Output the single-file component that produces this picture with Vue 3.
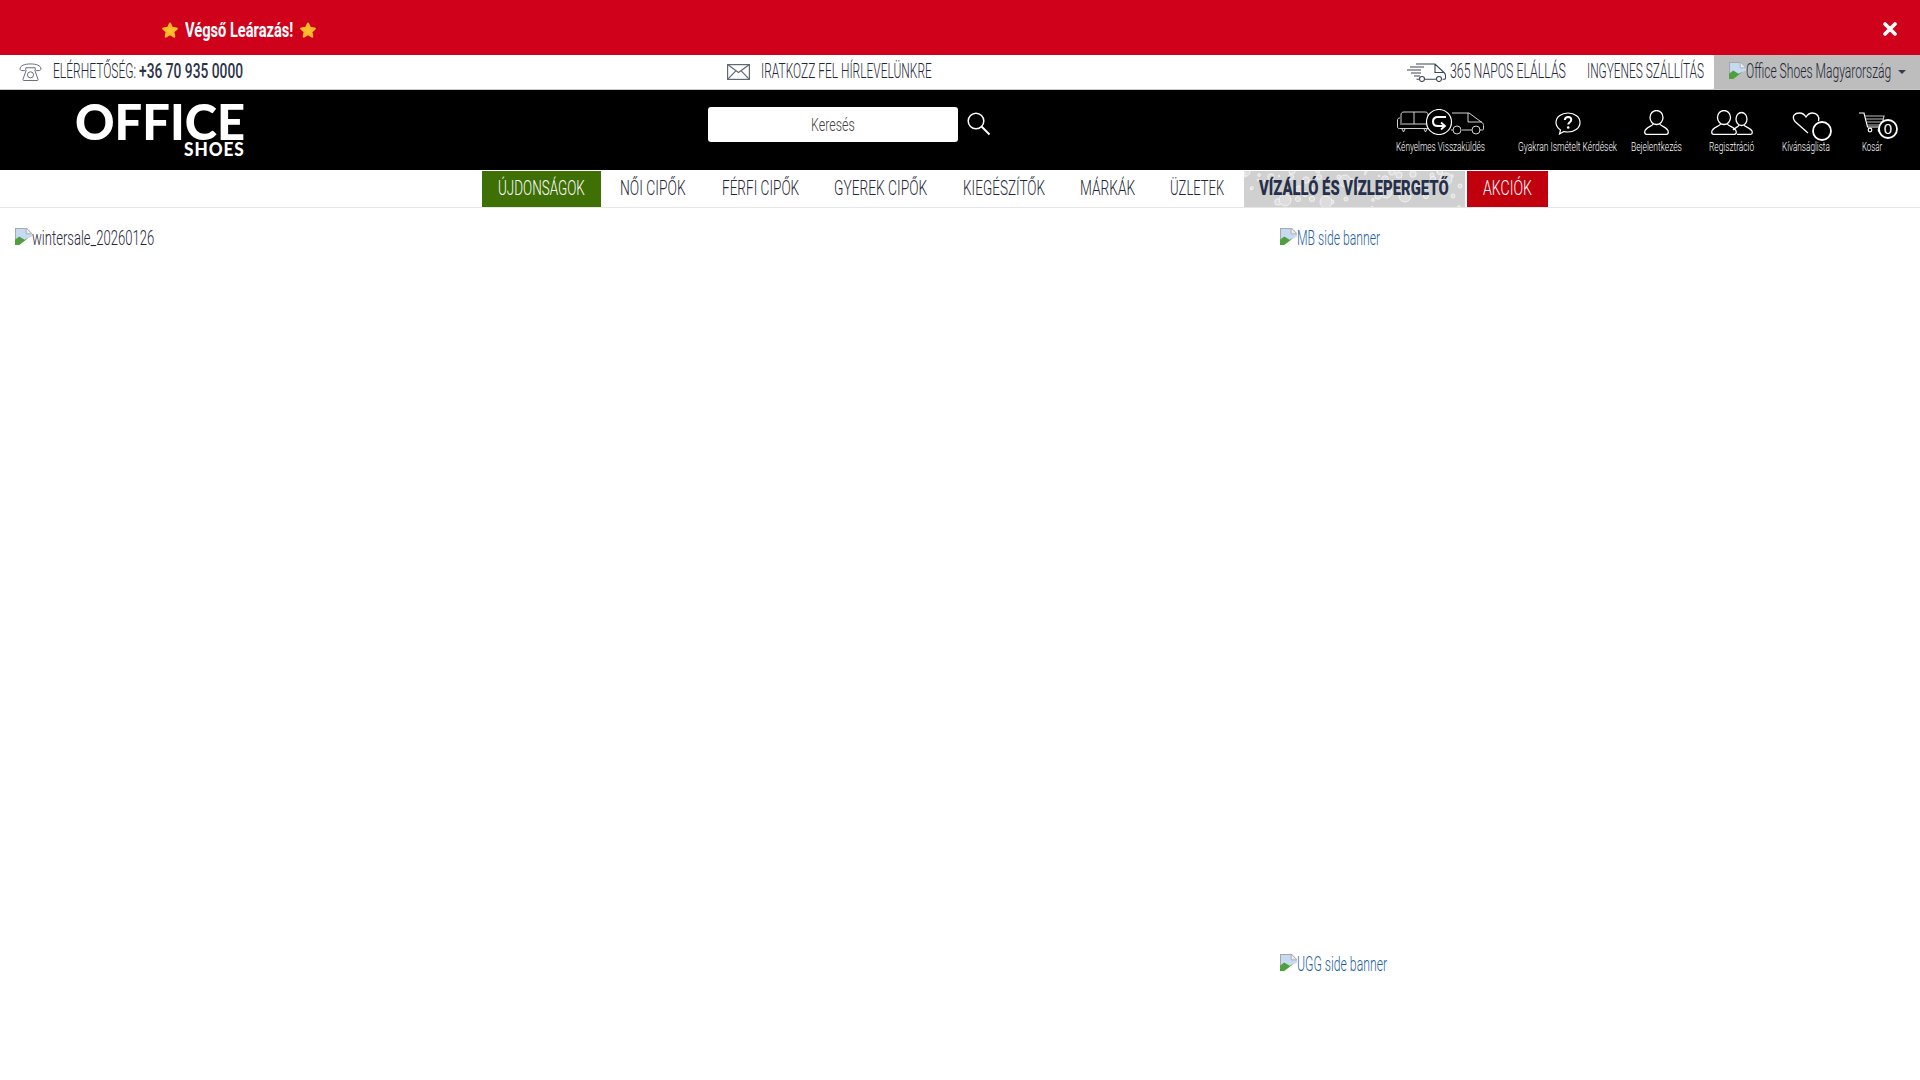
<template>
  <div class="page">
    <div class="promo">
      <div class="promo-text">
        <svg class="star" viewBox="0 0 24 24"><path d="M12 3.500l2.700 5.800 6.300.8-4.600 4.300 1.200 6.300L12 17.400l-5.600 3.300 1.200-6.300L3 10.100l6.300-.8z" fill="#fcc02e" stroke="#fcb62a" stroke-width="3" stroke-linejoin="round"/></svg>
        <span class="fit" v-fit="108"><span class="promo-label">Végső Leárazás!</span></span>
        <svg class="star" viewBox="0 0 24 24"><path d="M12 3.500l2.700 5.800 6.300.8-4.600 4.300 1.200 6.300L12 17.400l-5.600 3.300 1.200-6.300L3 10.100l6.300-.8z" fill="#fcc02e" stroke="#fcb62a" stroke-width="3" stroke-linejoin="round"/></svg>
      </div>
      <svg class="close" viewBox="0 0 14 14"><path d="M2 2l10 10M12 2L2 12" stroke="#fff" stroke-width="3.600" stroke-linecap="round"/></svg>
    </div>

    <div class="infobar">
      <div class="contact">
        <svg class="ic-phone" viewBox="0 0 24 19" fill="none" stroke="#5f6675" stroke-width="1">
          <path d="M1 6.500C1 2.500 6 1 12 1s11 1.500 11 5.500c0 1-1 1.500-2 1.500h-2.500c-1 0-1.500-.7-1.500-2V5H7v1c0 1.300-.5 2-1.500 2H3C2 8 1 7.500 1 6.500z"/>
          <path d="M7.500 7.500L4 17.500c0 .5.300 1 1 1h14c.7 0 1-.5 1-1l-3.500-10"/>
          <circle cx="12" cy="12.500" r="3.200"/>
        </svg>
        <span class="fit" v-fit="83"><span class="info-label">ELÉRHETŐSÉG:</span></span>
        <span class="fit phone" v-fit="104"><span class="info-label strong">+36 70 935 0000</span></span>
      </div>
      <div class="newsletter">
        <svg class="ic-mail" viewBox="0 0 23 16" fill="none" stroke="#5f6675" stroke-width="1.200">
          <rect x=".6" y=".6" width="21.800" height="14.800"/>
          <path d="M.6.6l10.900 8 10.900-8M.6 15.400l8.200-8.600M22.400 15.400l-8.200-8.600"/>
        </svg>
        <span class="fit" v-fit="171"><span class="info-label">IRATKOZZ FEL HÍRLEVELÜNKRE</span></span>
      </div>
      <div class="perks">
        <svg class="ic-truck" viewBox="0 0 40 20" fill="none" stroke="#3d4456" stroke-width="1.100">
          <path d="M9 2h19l9 8.500c1.200 1 1.500 1.500 1.500 3V16c0 .8-.5 1.300-1.300 1.300h-1.700M29 17.300H18M12 17.300H9.500M28 2v8.500h9"/>
          <circle cx="15" cy="17" r="2.500"/><circle cx="32" cy="17" r="2.500"/>
          <path d="M3 5h14M0 8h14M4 11h10M7 14h6"/>
        </svg>
        <span class="fit" v-fit="116"><span class="info-label">365 NAPOS ELÁLLÁS</span></span>
        <span class="fit shipping" v-fit="117"><span class="info-label">INGYENES SZÁLLÍTÁS</span></span>
      </div>
      <div class="country">
        <svg class="broken" viewBox="0 0 16 16">
          <path d="M0 0h11l5 5v3L0 15z" fill="#c6daf3"/>
          <path d="M.5 14V.5h10.300l4.700 4.700" fill="none" stroke="#a8a8a8"/>
          <path d="M10.500.500v5h5" fill="#eee" stroke="#a8a8a8" stroke-width=".8"/>
          <path d="M0 16v-5l4-3 5 3 4-2-5 4-4 3z" fill="#4f9f3c"/>
        </svg>
        <span class="fit" v-fit="145"><span class="info-label">Office Shoes Magyarország</span></span>
        <i class="caret"></i>
      </div>
    </div>

    <header class="mainbar">
      <div class="logo-col">
        <div class="logo">
          <span class="fit" v-fit="170"><span class="logo-top">OFFICE</span></span>
          <span class="fit logo-line" v-fit="61"><span class="logo-sub">SHOES</span></span>
        </div>
      </div>
      <div class="search">
        <div class="search-input"><span class="fit" v-fit="44"><span class="search-ph">Keresés</span></span></div>
        <svg class="ic-search" viewBox="0 0 24 24" fill="none" stroke="#fff">
          <circle cx="9" cy="9" r="7.800" stroke-width="1.500"/>
          <path d="M14.500 14.500l8 8" stroke-width="2"/>
        </svg>
      </div>
      <div class="tools">
        <div v-for="t in tools" :key="t.label" class="tool" :class="'tool-' + t.icon" :style="{ marginLeft: t.gap + 'px' }">
          <div class="tool-icon">
            <svg v-if="t.icon === 'returns'" width="88" height="26" viewBox="0 0 88 26" fill="none" stroke="#e8e8e8" stroke-width=".9">
              <path d="M4 6c0-2 1-3 3-3h21c2 0 3 1 3 3v2M3 9c-2 0-2.500 1-2.500 2v7c0 1 .5 1.500 2 1.500h29M4 14V6M3 15h28M17 3v12M5 20l1.500 3 1.500-3M27 20l1.500 3 1.500-3"/>
              <circle cx="42" cy="13" r="12.500" fill="#000" stroke="#fff" stroke-width="1.200"/>
              <path d="M49 8h-8c-3 0-5 1.500-5 4.500s2 4.500 5 4.500h6" stroke="#fff" stroke-width="2"/>
              <path d="M44 13.500l4 3.500-4 3.500" stroke="#fff" stroke-width="1.800"/>
              <path d="M55 4h17l13 9.500c1 .8 1.500 1.500 1.500 3V20c0 .5-.5 1-1 1h-3M75 21H65M56 21h-2M71 4v9h14"/>
              <circle cx="60" cy="21" r="4"/><circle cx="79" cy="21" r="4"/>
            </svg>
            <svg v-else-if="t.icon === 'help'" width="26" height="23" viewBox="0 0 26 23" fill="none" stroke="#fff" stroke-width="1.200">
              <path d="M13 1c6.800 0 12 4 12 9.500S19.800 20 13 20c-1.500 0-3-.2-4-.5L4.500 22l1-4C2.800 16 1 13.500 1 10.500 1 5 6.200 1 13 1z"/>
              <path d="M9.800 8c.2-1.800 1.500-3 3.300-3 1.900 0 3.200 1.200 3.200 2.800 0 2.400-3 2.500-3 4.700" stroke-width="2"/>
              <circle cx="13.200" cy="15.500" r="1.300" fill="#fff" stroke="none"/>
            </svg>
            <svg v-else-if="t.icon === 'user'" width="25" height="25" viewBox="0 0 25 25" fill="none" stroke="#fff" stroke-width="1.300">
              <ellipse cx="12.500" cy="7.500" rx="6.500" ry="7"/>
              <path d="M9 14c0 2-8.300 3.500-8.300 8 0 1.300.7 2.300 2 2.300h19.600c1.300 0 2-1 2-2.300 0-4.500-8.300-6-8.300-8"/>
            </svg>
            <svg v-else-if="t.icon === 'users'" width="42" height="25" viewBox="0 0 42 25" fill="none" stroke="#fff" stroke-width="1.300">
              <ellipse cx="13" cy="7.500" rx="6.500" ry="7"/>
              <path d="M9.500 14c0 2-8.800 3.500-8.800 8 0 1.300.7 2.300 2 2.300h20.600c1.300 0 2-1 2-2.300 0-4.500-8.800-6-8.800-8"/>
              <ellipse cx="30.500" cy="9" rx="5.500" ry="6.500"/>
              <path d="M28 15c0 1.500-3.500 2.500-6 5M33 15c0 2 8.300 3 8.300 7.500 0 1-.6 1.800-1.700 1.800H26"/>
            </svg>
            <svg v-else-if="t.icon === 'wish'" width="52" height="30" viewBox="0 0 52 30" fill="none" stroke="#fff" stroke-width="1.300">
              <path d="M28 21L15 9.500C11 4 15 1 19.500 1c3 0 5 1.500 6.500 4 1.500-2.500 3.500-4 6.500-4 4.500 0 7.500 4 6 8"/>
              <circle cx="42" cy="19" r="9" fill="#000" stroke-width="1.800"/>
            </svg>
            <svg v-else width="60" height="28" viewBox="0 0 60 28" fill="none" stroke="#fff" stroke-width="1.200">
              <path d="M17 1h5l3.500 14h13"/>
              <path d="M23 4h19l-2 9H25M24 7h17M25 10h15.500" stroke="#bbb"/>
              <circle cx="28" cy="18" r="1.800"/><circle cx="38" cy="18" r="1.800"/>
              <circle cx="46" cy="17" r="9" fill="#000" stroke-width="1.800"/>
              <text x="46" y="22" class="cart-count">0</text>
            </svg>
          </div>
          <span class="fit" v-fit="t.width"><span class="tool-label">{{ t.label }}</span></span>
        </div>
      </div>
    </header>

    <nav class="menu">
      <a v-for="m in menu" :key="m.label" class="menu-item" :class="m.cls">
        <svg v-if="m.cls === 'water'" class="drops" viewBox="0 0 221 36" preserveAspectRatio="none">
          <circle v-for="(d, i) in drops" :key="i" :cx="d.x" :cy="d.y" :r="d.r" fill="#dcdcdc" stroke="#f6f6f6" stroke-width=".8"/>
        </svg>
        <span class="fit" v-fit="m.width"><span class="menu-label">{{ m.label }}</span></span>
      </a>
    </nav>

    <main class="content">
      <div class="hero">
        <div class="pic">
          <svg class="broken" viewBox="0 0 16 16">
            <path d="M0 0h11l5 5v3L0 15z" fill="#c6daf3"/>
            <path d="M.5 14V.5h10.300l4.700 4.700" fill="none" stroke="#a8a8a8"/>
            <path d="M10.500.500v5h5" fill="#eee" stroke="#a8a8a8" stroke-width=".8"/>
            <path d="M0 16v-5l4-3 5 3 4-2-5 4-4 3z" fill="#4f9f3c"/>
          </svg>
          <span class="fit" v-fit="122"><span class="alt">wintersale_20260126</span></span>
        </div>
      </div>
      <aside class="side">
        <a v-for="b in banners" :key="b.label" class="pic side-pic">
          <svg class="broken" viewBox="0 0 16 16">
            <path d="M0 0h11l5 5v3L0 15z" fill="#c6daf3"/>
            <path d="M.5 14V.5h10.300l4.700 4.700" fill="none" stroke="#a8a8a8"/>
            <path d="M10.500.500v5h5" fill="#eee" stroke="#a8a8a8" stroke-width=".8"/>
            <path d="M0 16v-5l4-3 5 3 4-2-5 4-4 3z" fill="#4f9f3c"/>
          </svg>
          <span class="fit" v-fit="b.width"><span class="alt link">{{ b.label }}</span></span>
        </a>
      </aside>
    </main>
  </div>
</template>

<script setup>
// Oswald is not available here, so text is squeezed to the width it has in the design
const vFit = {
  mounted(el, binding) {
    const inner = el.firstElementChild
    el.style.width = binding.value + 'px'
    inner.style.transform = `scaleX(${binding.value / inner.offsetWidth})`
  }
}

const tools = [
  { label: 'Kényelmes Visszaküldés', icon: 'returns', width: 89, gap: 0 },
  { label: 'Gyakran Ismételt Kérdések', icon: 'help', width: 99, gap: 33 },
  { label: 'Bejelentkezés', icon: 'user', width: 51, gap: 14 },
  { label: 'Regisztráció', icon: 'users', width: 45, gap: 27 },
  { label: 'Kívánságlista', icon: 'wish', width: 48, gap: 28 },
  { label: 'Kosár', icon: 'cart', width: 20, gap: 32 }
]

const menu = [
  { label: 'ÚJDONSÁGOK', width: 87, cls: 'fresh' },
  { label: 'NŐI CIPŐK', width: 66 },
  { label: 'FÉRFI CIPŐK', width: 77 },
  { label: 'GYEREK CIPŐK', width: 93 },
  { label: 'KIEGÉSZÍTŐK', width: 82 },
  { label: 'MÁRKÁK', width: 55 },
  { label: 'ÜZLETEK', width: 54 },
  { label: 'VÍZÁLLÓ ÉS VÍZLEPERGETŐ', width: 190, cls: 'water' },
  { label: 'AKCIÓK', width: 49, cls: 'sale' }
]

const banners = [
  { label: 'MB side banner', width: 83 },
  { label: 'UGG side banner', width: 90 }
]

// water drops behind the waterproof menu item
const drops = []
for (let i = 0; i < 60; i++) {
  drops.push({
    x: (i * 67) % 221,
    y: (i * i * 13 + i * 5) % 37,
    r: i % 9 === 0 ? 6 : 0.8 + ((i * 7) % 5) * 0.6
  })
}
</script>

<style scoped>
.page {
  font-family: Roboto, "Liberation Sans", Arial, sans-serif;
  color: #1f2738;
  min-height: 1080px;
  background: #fff;
}

.fit {
  display: inline-flex;
  flex: none;
}
.fit > span {
  flex: none;
  white-space: nowrap;
  transform-origin: left center;
}

.promo {
  height: 55px;
  background: #d0021b;
  display: flex;
  align-items: center;
  padding: 4px 23px 0 161px;
  box-sizing: border-box;
}
.promo-text {
  display: flex;
  align-items: center;
  gap: 6px;
}
.promo-label {
  font-size: 21px;
  font-weight: 700;
  color: #fff;
}
.star {
  width: 18px;
  height: 18px;
}
.close {
  width: 14px;
  height: 14px;
  margin-left: auto;
  margin-top: -2px;
}

.infobar {
  height: 35px;
  border-bottom: 1px solid #c8c8c8;
  box-sizing: border-box;
  display: flex;
  align-items: center;
}
.info-label {
  font-size: 20px;
  font-weight: 300;
  line-height: 30px;
  display: block;
  margin-top: -2px;
}
.info-label.strong {
  font-weight: 500;
  color: #2c3446;
}
.contact {
  display: flex;
  align-items: center;
  padding-left: 19px;
  width: 727px;
  box-sizing: border-box;
}
.ic-phone {
  width: 23px;
  height: 18px;
  margin-right: 11px;
}
.phone {
  margin-left: 3px;
}
.newsletter {
  display: flex;
  align-items: center;
}
.ic-mail {
  width: 23px;
  height: 16px;
  margin-right: 11px;
}
.perks {
  display: flex;
  align-items: center;
  margin-left: auto;
}
.ic-truck {
  width: 40px;
  height: 20px;
  margin-right: 3px;
}
.shipping {
  margin-left: 21px;
}
.country {
  width: 206px;
  height: 34px;
  margin-left: 10px;
  background: #bdbdbd;
  display: flex;
  align-items: center;
  padding-left: 15px;
  box-sizing: border-box;
}
.broken {
  width: 17px;
  height: 17px;
  flex: none;
  margin-bottom: 3px;
}
.caret {
  margin-left: 7px;
  border-top: 4px solid #343d50;
  border-left: 4px solid transparent;
  border-right: 4px solid transparent;
}

.mainbar {
  height: 80px;
  background: #000;
  display: flex;
}
.logo-col {
  width: 708px;
  padding: 13px 0 0 75px;
  box-sizing: border-box;
}
.logo {
  width: 170px;
  display: flex;
  flex-direction: column;
  align-items: flex-end;
  color: #fff;
  font-family: Lato, "Liberation Sans", Arial, sans-serif;
  font-weight: 900;
}
.logo-top {
  font-size: 50px;
  line-height: 36px;
}
.logo-line {
  margin-top: 4px;
}
.logo-sub {
  font-size: 18px;
  line-height: 13px;
  letter-spacing: 1px;
}
.search {
  display: flex;
  align-items: flex-start;
  padding-top: 17px;
}
.search-input {
  width: 250px;
  height: 35px;
  background: #fff;
  border-radius: 3px;
  display: flex;
  align-items: center;
  justify-content: center;
}
.search-ph {
  font-size: 19px;
  font-weight: 300;
  color: #444;
}
.ic-search {
  width: 24px;
  height: 24px;
  margin: 5px 0 0 9px;
}
.tools {
  display: flex;
  margin-left: auto;
  padding-right: 38px;
}
.tool {
  display: flex;
  flex-direction: column;
  align-items: center;
  padding-top: 19px;
}
.tool-icon {
  height: 30px;
  display: flex;
  justify-content: center;
  align-items: flex-start;
  width: 1px;
}
.tool-icon svg {
  flex: none;
}
.tool-help .tool-icon svg,
.tool-wish .tool-icon svg,
.tool-cart .tool-icon svg {
  margin-top: 3px;
}
.tool-user .tool-icon svg,
.tool-users .tool-icon svg {
  margin-top: 1px;
}
.tool-label {
  font-size: 13px;
  font-weight: 300;
  line-height: 16px;
  color: #fff;
}
.cart-count {
  font-size: 15px;
  fill: #fff;
  stroke: none;
  text-anchor: middle;
  font-family: "Liberation Sans Narrow", "Liberation Sans", sans-serif;
}

.menu {
  height: 38px;
  border-bottom: 1px solid #e6e6e6;
  box-sizing: border-box;
  display: flex;
  justify-content: flex-start;
  padding: 1px 0 0 482px;
  gap: 3.4px;
}
.menu-item {
  position: relative;
  height: 36px;
  padding: 0 16px 3px;
  box-sizing: border-box;
  display: flex;
  align-items: center;
  overflow: hidden;
}
.menu-label {
  position: relative;
  font-size: 21px;
  font-weight: 300;
  line-height: 30px;
}
.fresh {
  background: #3e7005;
  color: #fff;
}
.water {
  background: #d0d0d0;
  width: 221px;
  padding: 0 15.500px 3px;
}
.water .menu-label {
  font-weight: 900;
  color: #26304a;
}
.drops {
  position: absolute;
  left: 0;
  top: 0;
  width: 100%;
  height: 100%;
}
.sale {
  background: #c1000e;
  color: #fff;
  margin-left: -1.400px;
}

.content {
  display: flex;
  padding: 18px 0 0 15px;
}
.hero {
  width: 1265px;
}
.side {
  display: flex;
  flex-direction: column;
  gap: 702px;
}
.pic {
  display: flex;
  align-items: center;
  height: 24px;
  line-height: 24px;
}
.alt {
  font-size: 20px;
  font-weight: 300;
  color: #1f2738;
}
.alt.link {
  color: #1f5f9f;
}
</style>

<style>
body {
  margin: 0;
}
</style>
